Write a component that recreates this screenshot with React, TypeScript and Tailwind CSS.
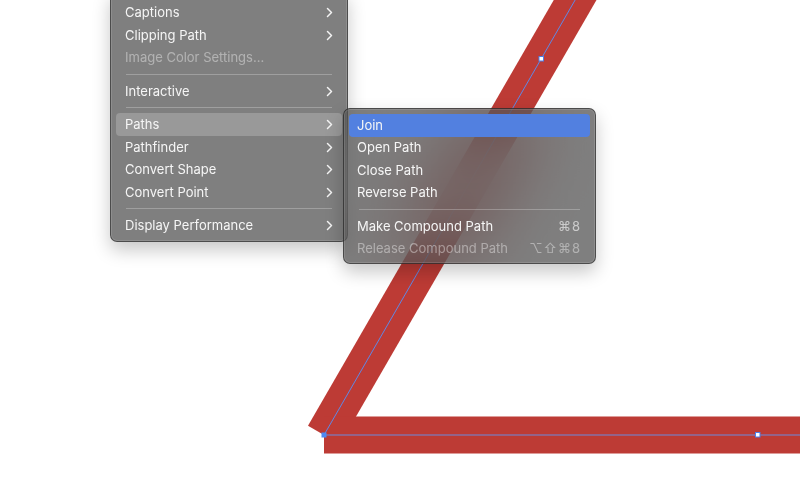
import React from "react";

const font = { fontFamily: "Inter, 'DejaVu Sans', sans-serif" };

function Chevron() {
  return (
    <svg width="7" height="11" viewBox="0 0 7 11" className="shrink-0">
      <polyline points="1.5,1.5 5.5,5.5 1.5,9.5" fill="none" stroke="#f4f4f4" strokeWidth="1.5" strokeLinecap="round" strokeLinejoin="round" />
    </svg>
  );
}

type Item = { label: string; sub?: boolean; disabled?: boolean; hl?: "gray" | "blue"; shortcut?: string } | "sep";

function Menu({ items, className, padL }: { items: Item[]; className: string; padL: string }) {
  return (
    <div className={className}>
      {items.map((it, i) =>
        it === "sep" ? (
          <div key={i} className="h-[11px] flex items-center px-[10px]">
            <div className="h-px w-full bg-white/25" />
          </div>
        ) : (
          <div
            key={i}
            className={`h-[22.5px] flex items-center justify-between ${padL} pr-[9px] rounded-[4px] ${
              it.hl === "gray" ? "bg-white/20" : it.hl === "blue" ? "bg-[#5280e0]" : ""
            }`}
          >
            <span className={`text-[13px] leading-none ${it.disabled ? "text-white/40" : "text-[#f6f6f6]"}`}>{it.label}</span>
            {it.sub && <Chevron />}
            {it.shortcut && (
              <span className={`text-[13px] leading-none tracking-[1px] ${it.disabled ? "text-white/40" : "text-white/60"}`}>{it.shortcut}</span>
            )}
          </div>
        )
      )}
    </div>
  );
}

export default function App() {
  const menuBase =
    "absolute flex flex-col rounded-[7px] border border-black/40 bg-[rgba(55,55,55,0.64)] backdrop-blur-[40px] shadow-[inset_0_0_0_1px_rgba(255,255,255,0.12),0_8px_18px_rgba(0,0,0,0.22)]";
  return (
    <div className="relative w-[800px] h-[483px] bg-white overflow-hidden" style={font}>
      <svg className="absolute inset-0" width="800" height="483" viewBox="0 0 800 483">
        <line x1="324" y1="435" x2="604" y2="-50" stroke="#bd3b35" strokeWidth="37" />
        <line x1="324" y1="435" x2="860" y2="435" stroke="#bd3b35" strokeWidth="37" />
        <line x1="324" y1="435" x2="604" y2="-50" stroke="#5f88e6" strokeWidth="1" />
        <line x1="324" y1="435" x2="860" y2="435" stroke="#6b8be0" strokeWidth="1" />
        <rect x="321.5" y="432.5" width="5" height="5" fill="#4d8af5" />
        <rect x="539" y="56.5" width="4.5" height="4.5" fill="#ffffff" stroke="#4d7fe8" strokeWidth="1" />
        <rect x="755.5" y="432.5" width="4.5" height="4.5" fill="#ffffff" stroke="#4d7fe8" strokeWidth="1" />
      </svg>

      <Menu
        padL="pl-[9px]"
        className={`${menuBase} left-[110px] top-[-10px] w-[238px] pt-[10.25px] pb-[4.25px] px-[5px]`}
        items={[
          { label: "Captions", sub: true },
          { label: "Clipping Path", sub: true },
          { label: "Image Color Settings...", disabled: true },
          "sep",
          { label: "Interactive", sub: true },
          "sep",
          { label: "Paths", sub: true, hl: "gray" },
          { label: "Pathfinder", sub: true },
          { label: "Convert Shape", sub: true },
          { label: "Convert Point", sub: true },
          "sep",
          { label: "Display Performance", sub: true },
        ]}
      />

      <Menu
        padL="pl-[8px]"
        className={`${menuBase} left-[343px] top-[108px] w-[253px] pt-[5px] pb-[3px] px-[5px]`}
        items={[
          { label: "Join", hl: "blue" },
          { label: "Open Path" },
          { label: "Close Path" },
          { label: "Reverse Path" },
          "sep",
          { label: "Make Compound Path", shortcut: "⌘8" },
          { label: "Release Compound Path", disabled: true, shortcut: "⌥⇧⌘8" },
        ]}
      />
    </div>
  );
}
